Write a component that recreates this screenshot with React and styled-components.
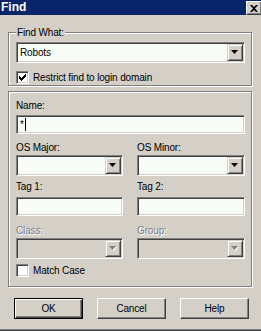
import React from 'react'
import styled, { createGlobalStyle } from 'styled-components'

const GlobalStyle = createGlobalStyle`
body {
  margin: 0;
  font-family: "Liberation Sans", Arial, sans-serif;
  background: #d4d0c8;
}
`;

const Window = styled.div`
width: 261px;
height: 331px;
box-sizing: border-box;
background: #d4d0c8;
border-bottom: 1px solid #404040;
box-shadow: inset 0 -1px 0 #808080;
overflow: hidden;
display: flex;
flex-direction: column;
font-size: 10px;
letter-spacing: -0.15px;
color: #000;
`;

const TitleBar = styled.div`
height: 15px;
flex-shrink: 0;
background: #0a246a;
display: flex;
justify-content: space-between;
align-items: flex-start;
padding-left: 1px;
`;

const TitleText = styled.div`
color: #fff;
font-weight: bold;
font-size: 12px;
letter-spacing: 0;
line-height: 15px;
`;

const CloseButton = styled.div`
width: 16px;
height: 14px;
margin-top: 1px;
margin-right: -1px;
box-sizing: border-box;
background: #d4d0c8;
border: 1px solid;
border-color: #fff #404040 #404040 #fff;
box-shadow: inset -1px -1px 0 #808080;
display: flex;
align-items: center;
justify-content: center;
`;

const GroupBox = styled.div`
position: relative;
margin: ${({ $mt }) => $mt}px 0 0 8px;
width: 244px;
box-sizing: border-box;
border: 1px solid #808080;
box-shadow: 1px 1px 0 #fff, inset 1px 1px 0 #fff;
padding: ${({ $pad }) => $pad};
display: flex;
flex-direction: column;
align-items: flex-start;
`;

const Legend = styled.div`
position: absolute;
top: -6px;
left: 7px;
padding: 0 1px;
background: #d4d0c8;
line-height: 12px;
`;

const Label = styled.div`
line-height: 12px;
height: 12px;
margin-top: ${({ $mt }) => $mt || 0}px;
margin-bottom: ${({ $mb }) => $mb || 0}px;
color: ${({ $disabled }) => ($disabled ? '#808080' : '#000')};
text-shadow: ${({ $disabled }) => ($disabled ? '1px 1px 0 #fff' : 'none')};
`;

const Sunken = styled.div`
width: ${({ $w }) => $w}px;
height: ${({ $h }) => $h}px;
box-sizing: border-box;
border: 1px solid;
border-color: #808080 #fff #fff #808080;
box-shadow: inset 1px 1px 0 #404040, inset -1px -1px 0 #d4d0c8;
background: ${({ $disabled }) => ($disabled ? '#d4d0c8' : '#f7fcf7')};
padding: 1px;
display: flex;
align-items: center;
`;

const ComboText = styled.div`
flex: 1;
padding-left: 2px;
line-height: 17px;
`;

const DropButton = styled.div`
width: 16px;
height: 17px;
box-sizing: border-box;
background: #d4d0c8;
border: 1px solid;
border-color: #d4d0c8 #404040 #404040 #d4d0c8;
box-shadow: inset 1px 1px 0 #fff, inset -1px -1px 0 #808080;
display: flex;
align-items: center;
justify-content: center;
`;

const FieldText = styled.div`
padding-left: 2px;
line-height: 15px;
display: flex;
align-items: center;
`;

const Caret = styled.span`
display: inline-block;
width: 1px;
height: 13px;
background: #000;
margin-left: 1px;
`;

const CheckRow = styled.div`
display: flex;
align-items: center;
gap: 4px;
margin-top: ${({ $mt }) => $mt}px;
line-height: 13px;
`;

const CheckBox = styled.div`
width: 13px;
height: 13px;
box-sizing: border-box;
border: 1px solid;
border-color: #808080 #fff #fff #808080;
box-shadow: inset 1px 1px 0 #404040, inset -1px -1px 0 #d4d0c8;
background: #fff;
display: flex;
align-items: center;
justify-content: center;
`;

const Grid = styled.div`
display: grid;
grid-template-columns: 107px 108px;
column-gap: 14px;
`;

const Field = styled.div`
display: flex;
flex-direction: column;
`;

const ButtonRow = styled.div`
display: flex;
gap: 14px;
padding-left: 14px;
margin-top: 11px;
`;

const Button = styled.div`
width: 69px;
height: 21px;
box-sizing: border-box;
background: #d4d0c8;
border: 1px solid;
border-color: ${({ $default }) => ($default ? '#000' : '#fff #404040 #404040 #fff')};
box-shadow: ${({ $default }) =>
  $default
    ? 'inset 1px 1px 0 #fff, inset -1px -1px 0 #404040, inset -2px -2px 0 #808080'
    : 'inset -1px -1px 0 #808080'};
display: flex;
align-items: center;
justify-content: center;
line-height: 12px;
`;

const Arrow = ({ disabled }) => (
  <svg width="8" height="5" viewBox="0 0 8 5" style={{ overflow: 'visible' }}>
    {disabled && <path d="M1 1h7L4.5 5z" fill="#fff" />}
    <path d="M0 0h7L3.5 4z" fill={disabled ? '#808080' : '#000'} />
  </svg>
);

const Combo = ({ w, value, disabled }) => (
  <Sunken $w={w} $h={21} $disabled={disabled}>
    <ComboText>{value}</ComboText>
    <DropButton>
      <Arrow disabled={disabled} />
    </DropButton>
  </Sunken>
);

const Check = () => (
  <svg width="7" height="7" viewBox="0 0 7 7">
    <path d="M0 2h1v3H0zM1 3h1v3H1zM2 4h1v3H2zM3 3h1v3H3zM4 2h1v3H4zM5 1h1v3H5zM6 0h1v3H6z" fill="#000" />
  </svg>
);

const App = () => {
  return (
    <Window>
      <GlobalStyle />
      <TitleBar>
        <TitleText>Find</TitleText>
        <CloseButton>
          <svg width="8" height="7" viewBox="0 0 8 7">
            <path d="M0 0h2l2 2 2-2h2L5 3.5 8 7H6L4 5 2 7H0l3-3.5z" fill="#000" />
          </svg>
        </CloseButton>
      </TitleBar>

      <GroupBox $mt={17} $pad="9px 0 1px 7px">
        <Legend>Find What:</Legend>
        <Combo w={229} value="Robots" />
        <CheckRow $mt={8}>
          <CheckBox><Check /></CheckBox>
          Restrict find to login domain
        </CheckRow>
      </GroupBox>

      <GroupBox $mt={5} $pad="0 0 9px 7px">
        <Label $mt={8} $mb={3}>Name:</Label>
        <Sunken $w={229} $h={19}>
          <FieldText>*<Caret /></FieldText>
        </Sunken>
        <Grid>
          <Field>
            <Label $mt={8} $mb={1}>OS Major:</Label>
            <Combo w={107} />
          </Field>
          <Field>
            <Label $mt={8} $mb={1}>OS Minor:</Label>
            <Combo w={108} />
          </Field>
          <Field>
            <Label $mt={5} $mb={4}>Tag 1:</Label>
            <Sunken $w={107} $h={19} />
          </Field>
          <Field>
            <Label $mt={5} $mb={4}>Tag 2:</Label>
            <Sunken $w={108} $h={19} />
          </Field>
          <Field>
            <Label $mt={9} $mb={1} $disabled>Class:</Label>
            <Combo w={107} disabled />
          </Field>
          <Field>
            <Label $mt={9} $mb={1} $disabled>Group:</Label>
            <Combo w={108} disabled />
          </Field>
        </Grid>
        <CheckRow $mt={5}>
          <CheckBox />
          Match Case
        </CheckRow>
      </GroupBox>

      <ButtonRow>
        <Button $default>OK</Button>
        <Button>Cancel</Button>
        <Button>Help</Button>
      </ButtonRow>
    </Window>
  )
}

export default App
